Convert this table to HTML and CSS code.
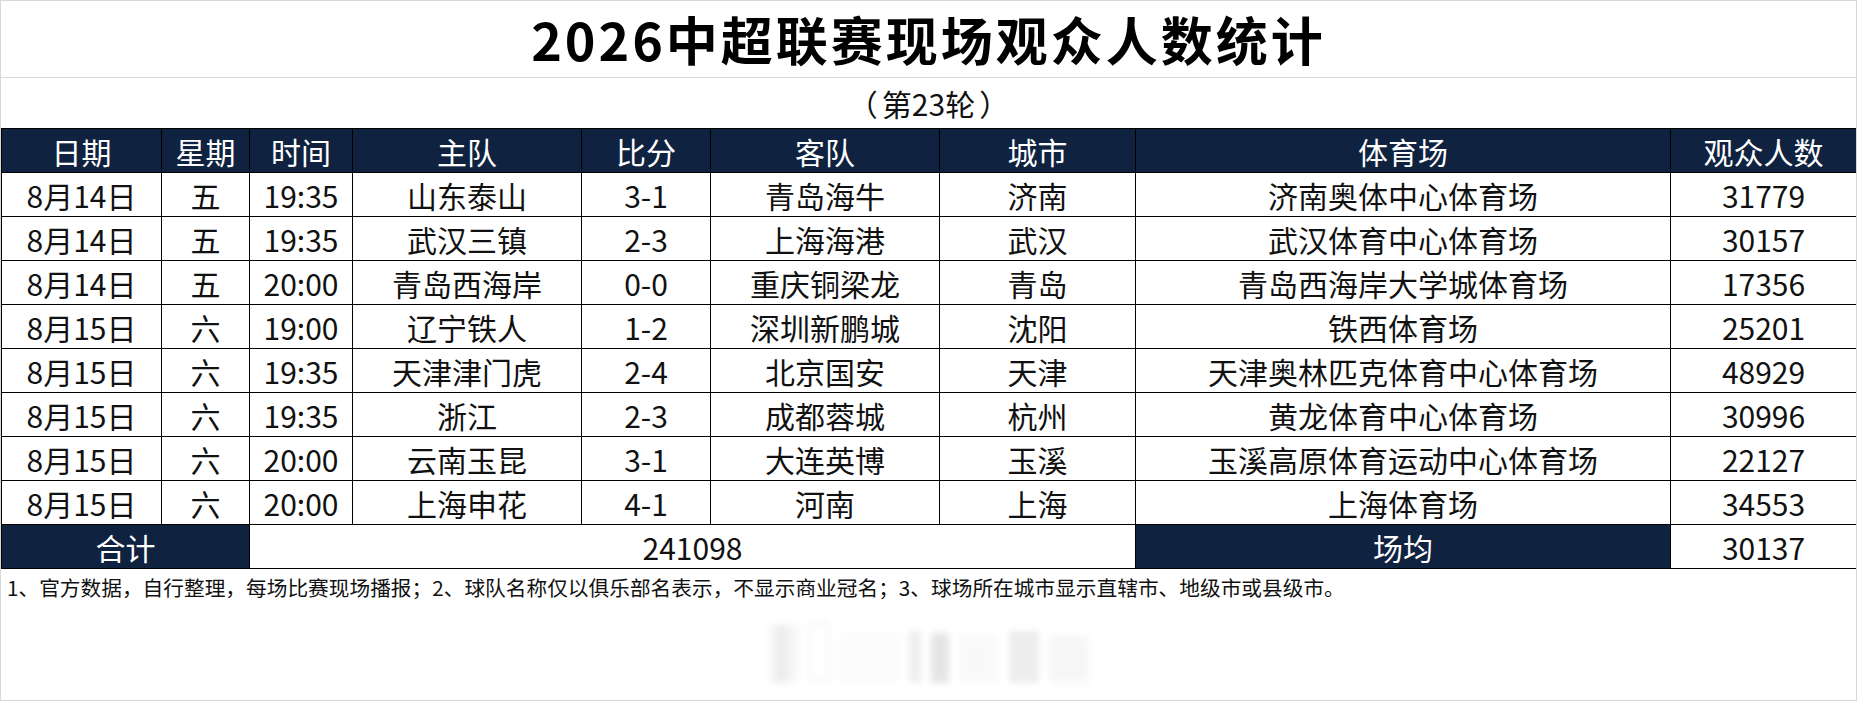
FILE: index.html
```html
<!DOCTYPE html>
<html lang="zh-CN">
<head>
<meta charset="utf-8">
<title>2026中超联赛现场观众人数统计</title>
<link rel="stylesheet" href="styles.css">
</head>
<body>
<div class="sheet">
  <div class="title">2026中超联赛现场观众人数统计</div>
  <div class="subtitle"><span class="paren">（</span>第23轮<span class="paren">）</span></div>
  <table class="stats">
    <colgroup>
      <col class="c-date"><col class="c-week"><col class="c-time"><col class="c-home"><col class="c-score"><col class="c-away"><col class="c-city"><col class="c-venue"><col class="c-att">
    </colgroup>
    <thead>
      <tr><th>日期</th><th>星期</th><th>时间</th><th>主队</th><th>比分</th><th>客队</th><th>城市</th><th>体育场</th><th>观众人数</th></tr>
    </thead>
    <tbody>
      <tr><td>8月14日</td><td>五</td><td>19:35</td><td>山东泰山</td><td>3-1</td><td>青岛海牛</td><td>济南</td><td>济南奥体中心体育场</td><td>31779</td></tr>
      <tr><td>8月14日</td><td>五</td><td>19:35</td><td>武汉三镇</td><td>2-3</td><td>上海海港</td><td>武汉</td><td>武汉体育中心体育场</td><td>30157</td></tr>
      <tr><td>8月14日</td><td>五</td><td>20:00</td><td>青岛西海岸</td><td>0-0</td><td>重庆铜梁龙</td><td>青岛</td><td>青岛西海岸大学城体育场</td><td>17356</td></tr>
      <tr><td>8月15日</td><td>六</td><td>19:00</td><td>辽宁铁人</td><td>1-2</td><td>深圳新鹏城</td><td>沈阳</td><td>铁西体育场</td><td>25201</td></tr>
      <tr><td>8月15日</td><td>六</td><td>19:35</td><td>天津津门虎</td><td>2-4</td><td>北京国安</td><td>天津</td><td>天津奥林匹克体育中心体育场</td><td>48929</td></tr>
      <tr><td>8月15日</td><td>六</td><td>19:35</td><td>浙江</td><td>2-3</td><td>成都蓉城</td><td>杭州</td><td>黄龙体育中心体育场</td><td>30996</td></tr>
      <tr><td>8月15日</td><td>六</td><td>20:00</td><td>云南玉昆</td><td>3-1</td><td>大连英博</td><td>玉溪</td><td>玉溪高原体育运动中心体育场</td><td>22127</td></tr>
      <tr><td>8月15日</td><td>六</td><td>20:00</td><td>上海申花</td><td>4-1</td><td>河南</td><td>上海</td><td>上海体育场</td><td>34553</td></tr>
    </tbody>
    <tfoot>
      <tr><th colspan="2">合计</th><td colspan="5">241098</td><th>场均</th><td>30137</td></tr>
    </tfoot>
  </table>
  <div class="notes">1、官方数据，自行整理，每场比赛现场播报；2、球队名称仅以俱乐部名表示，不显示商业冠名；3、球场所在城市显示直辖市、地级市或县级市。</div>
  <div class="mark">
    <div class="wm">
      <span class="b b1"></span><span class="b b2"></span><span class="b b3"></span><span class="b b4"></span><span class="b b5"></span><span class="b b6"></span><span class="b b7"></span><span class="b b8"></span>
    </div>
  </div>
</div>
</body>
</html>
```
FILE: styles.css
```css
html, body {
  margin: 0;
  padding: 0;
  background: #fff;
}
body {
  font-family: "Noto Sans CJK SC", "Noto Sans", sans-serif;
  color: #111;
}
.sheet {
  width: 1857px;
  height: 701px;
  box-sizing: border-box;
  border: 1px solid #d8d8d8;
  display: flex;
  flex-direction: column;
  overflow: hidden;
}
.title {
  height: 76px;
  flex: none;
  border-bottom: 1px solid #d8d8d8;
  display: flex;
  align-items: center;
  justify-content: center;
  font-size: 52px;
  font-weight: 700;
  letter-spacing: 3px;
  color: #000;
  line-height: 1.2;
}
.subtitle {
  height: 50px;
  flex: none;
  display: flex;
  align-items: center;
  justify-content: center;
  font-size: 30px;
  line-height: 1.3;
}
.paren {
  margin: 0 4px;
}
.stats {
  width: 1855px;
  flex: none;
  border-collapse: collapse;
  table-layout: fixed;
}
.c-date { width: 160px; }
.c-week { width: 88px; }
.c-time { width: 103px; }
.c-home { width: 229px; }
.c-score { width: 129px; }
.c-away { width: 229px; }
.c-city { width: 196px; }
.c-venue { width: 535px; }
.c-att { width: 186px; }
.stats tr {
  height: 44px;
}
.stats th,
.stats td {
  border: 1px solid #000;
  padding: 0;
  text-align: center;
  vertical-align: middle;
  font-size: 30px;
  font-weight: 400;
  line-height: 1;
  white-space: nowrap;
}
.stats th {
  background: #0f2240;
  color: #fff;
}
.notes {
  height: 36px;
  flex: none;
  display: flex;
  align-items: center;
  padding-left: 6px;
  font-size: 20.7px;
  line-height: 1.3;
  white-space: nowrap;
}
.mark {
  flex: 1;
  display: flex;
  justify-content: center;
  align-items: center;
}
.wm {
  width: 320px;
  height: 60px;
  display: flex;
  align-items: flex-end;
  gap: 10px;
  opacity: 0.3;
  filter: blur(3px);
}
.b {
  display: block;
  background: #c8c8c8;
}
.b1 { width: 30px; height: 58px; background: linear-gradient(90deg, #eee, #bbb 40%, #ddd 70%, #eee); }
.b2 { width: 16px; height: 58px; background: #fff; border: 2px solid #d0d0d0; border-radius: 8px 8px 2px 2px; }
.b3 { width: 60px; height: 50px; background: #f3f3f3; }
.b4 { width: 12px; height: 52px; background: #c8c8c8; }
.b5 { width: 18px; height: 50px; background: #a8a8a8; }
.b6 { width: 40px; height: 48px; background: #ededed; }
.b7 { width: 30px; height: 52px; background: #c4c4c4; }
.b8 { width: 40px; height: 46px; background: repeating-linear-gradient(180deg, #ccc 0 3px, #eee 3px 9px); }
```
